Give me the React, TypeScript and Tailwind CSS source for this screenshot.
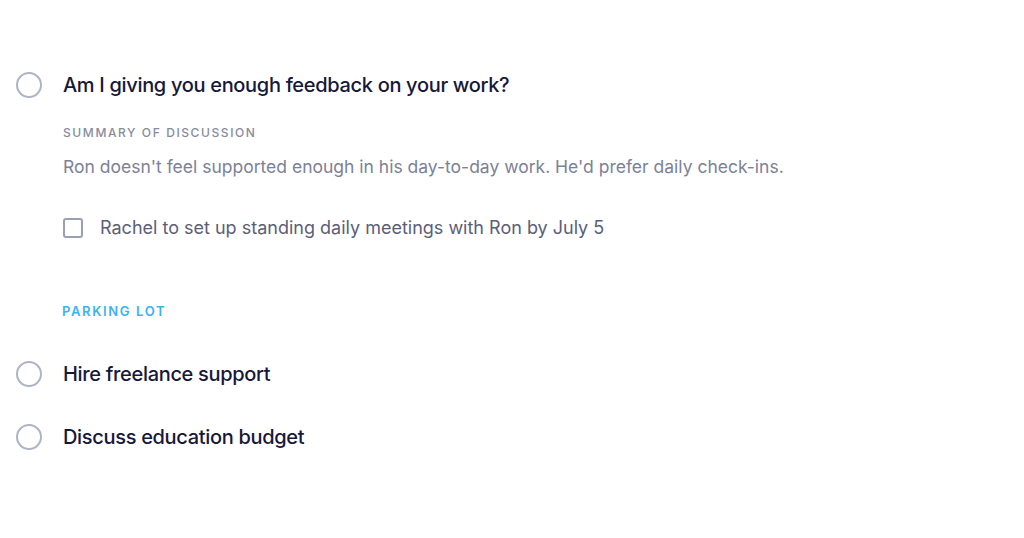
import type React from "react"

function Circle(): React.JSX.Element {
  return (
    <span className="block h-[26px] w-[26px] shrink-0 rounded-full border-2 border-[#aeb3c6] bg-white" />
  )
}

function Topic({ title }: { title: string }): React.JSX.Element {
  return (
    <div className="flex items-center gap-[21px] pl-4">
      <Circle />
      <h2 className="text-[20px] font-medium leading-[28px] tracking-[-0.32px] text-[#16183a]">
        {title}
      </h2>
    </div>
  )
}

export default function App(): React.JSX.Element {
  return (
    <main
      className="h-[538px] w-[1024px] bg-white pt-[71px]"
      style={{ fontFamily: "Inter, 'Noto Sans', sans-serif" }}
    >
      <Topic title="Am I giving you enough feedback on your work?" />
      <section className="pl-[63px]">
        <h3 className="mt-[26px] text-[12px] font-medium uppercase leading-4 tracking-[1.6px] text-[#878ba0]">
          Summary of Discussion
        </h3>
        <p className="mt-[14px] text-[17.5px] leading-6 text-[#7c8198]">
          Ron doesn't feel supported enough in his day-to-day work. He'd prefer daily check-ins.
        </p>
        <label className="mt-[37px] flex items-center gap-[17px]">
          <span className="block h-[20px] w-[20px] rounded-[3px] border-2 border-[#9a9fb3] bg-white" />
          <span className="text-[18px] leading-6 text-[#5b5e78]">
            Rachel to set up standing daily meetings with Ron by July 5
          </span>
        </label>
        <h3 className="-ml-px mt-[63px] text-[13px] font-semibold uppercase leading-4 tracking-[1.65px] text-[#36b4f4]">
          Parking Lot
        </h3>
      </section>
      <div className="mt-[41px] flex flex-col gap-[35px]">
        <Topic title="Hire freelance support" />
        <Topic title="Discuss education budget" />
      </div>
    </main>
  )
}
